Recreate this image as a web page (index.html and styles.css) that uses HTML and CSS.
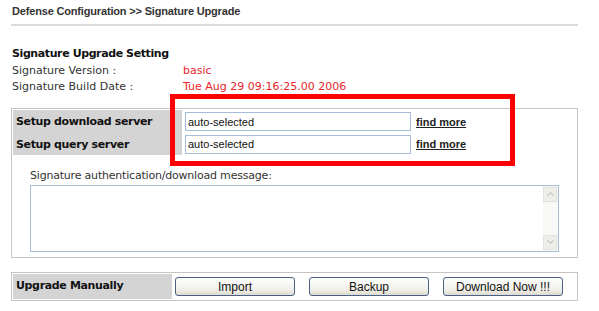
FILE: index.html
```html
<!DOCTYPE html>
<html lang="en">
<head>
    <meta charset="UTF-8">
    <title>Signature Upgrade</title>
    <link rel="stylesheet" href="styles.css">
</head>
<body>
    <div class="page">
        <div class="title">Defense Configuration &gt;&gt; Signature Upgrade</div>

        <div class="info">
            <div class="info-head">Signature Upgrade Setting</div>
            <div class="info-row first">
                <span class="info-label">Signature Version :</span>
                <span class="info-value">basic</span>
            </div>
            <div class="info-row">
                <span class="info-label">Signature Build Date :</span>
                <span class="info-value">Tue Aug 29 09:16:25.00 2006</span>
            </div>
        </div>

        <div class="box server-box">
            <div class="server-grid">
                <div class="label">Setup download server</div>
                <div class="field">
                    <input type="text" value="auto-selected">
                    <a href="#">find more</a>
                </div>
                <div class="label">Setup query server</div>
                <div class="field">
                    <input type="text" value="auto-selected">
                    <a href="#">find more</a>
                </div>
            </div>
            <div class="message">
                <div class="message-title">Signature authentication/download message:</div>
                <div class="msg-area">
                    <div class="scrollbar">
                        <span class="arrow up"></span>
                        <span class="arrow down"></span>
                    </div>
                </div>
            </div>
            <div class="highlight"></div>
        </div>

        <div class="box manual-box">
            <div class="label">Upgrade Manually</div>
            <div class="buttons">
                <button>Import</button>
                <button>Backup</button>
                <button>Download Now !!!</button>
            </div>
        </div>
    </div>
</body>
</html>
```

FILE: styles.css
```css
body {
    margin: 0;
    background: #fff;
    font-family: "DejaVu Sans", Verdana, sans-serif;
    font-size: 11px;
    color: #222;
}
.page {
    width: 567px;
    padding: 4px 0 0 11px;
}
.title {
    font-family: "Liberation Sans", Arial, sans-serif;
    font-weight: bold;
    font-size: 11px;
    letter-spacing: -0.17px;
    line-height: 14px;
    color: #333;
    padding: 0 0 6px 1px;
    border-bottom: 2px solid #dcdcd6;
}
.info {
    padding: 20px 0 0 1px;
}
.info-head {
    font-weight: bold;
    letter-spacing: -0.4px;
    line-height: 16px;
    color: #111;
}
.info-row {
    display: flex;
    line-height: 16px;
    color: #333;
}
.info-row.first { margin-top: 1px; }
.info-label { width: 171px; }
.info-value { color: #e8242c; }

.box {
    border: 1px solid #c6c6be;
    position: relative;
}
.server-box {
    margin-top: 13px;
    padding: 1px;
}
.server-grid {
    display: grid;
    grid-template-columns: 169px 1fr;
    grid-template-rows: 23px 22px;
}
.label {
    background: #d4d4d4;
    font-weight: bold;
    font-size: 11px;
    letter-spacing: -0.35px;
    color: #111;
    padding-left: 3px;
    display: flex;
    align-items: center;
}
.field {
    display: flex;
    align-items: center;
    padding-left: 3px;
}
.field input {
    width: 220px;
    height: 17px;
    margin: 0;
    padding: 0 2px;
    border: 1px solid #a7bcd9;
    font-family: "Liberation Sans", Arial, sans-serif;
    font-size: 11px;
    color: #111;
}
.field a {
    margin-left: 5px;
    font-family: "Liberation Sans", Arial, sans-serif;
    font-weight: bold;
    font-size: 11px;
    color: #222;
    text-decoration: underline;
}
.message {
    padding: 14px 17px 4px 17px;
}
.message-title {
    color: #333;
    letter-spacing: -0.2px;
    line-height: 13px;
    padding-bottom: 3px;
}
.msg-area {
    height: 65px;
    border: 1px solid #a7bcd9;
    display: flex;
    justify-content: flex-end;
}
.scrollbar {
    width: 14px;
    background: #f8f8f6;
    display: flex;
    flex-direction: column;
    justify-content: space-between;
    padding: 1px 1px 1px 0;
}
.arrow {
    height: 13px;
    background: #eeeeea;
    border: 1px solid #e2e2dc;
    position: relative;
}
.arrow::after {
    content: "";
    position: absolute;
    left: 4px;
    width: 4px;
    height: 4px;
    border: solid #c4c4bc;
    border-width: 1px 1px 0 0;
}
.arrow.up::after { top: 5px; transform: rotate(-45deg); }
.arrow.down::after { top: 2px; transform: rotate(135deg); }

.highlight {
    position: absolute;
    left: 158px;
    top: -15px;
    width: 335px;
    height: 62px;
    border: 5px solid #f00;
}

.manual-box {
    margin-top: 14px;
    padding: 1px;
    display: grid;
    grid-template-columns: 159px 1fr;
    height: 25px;
}
.manual-box .label {
    padding-bottom: 2px;
}
.buttons {
    display: flex;
    align-items: center;
    gap: 14px;
    padding-left: 3px;
}
.buttons button {
    width: 120px;
    height: 19px;
    padding: 0;
    border: 1px solid #4a6184;
    border-radius: 3px;
    background: linear-gradient(#ffffff, #f0efe8 70%, #dcdad0);
    font-family: "Liberation Sans", Arial, sans-serif;
    font-size: 12px;
    color: #111;
}
```
